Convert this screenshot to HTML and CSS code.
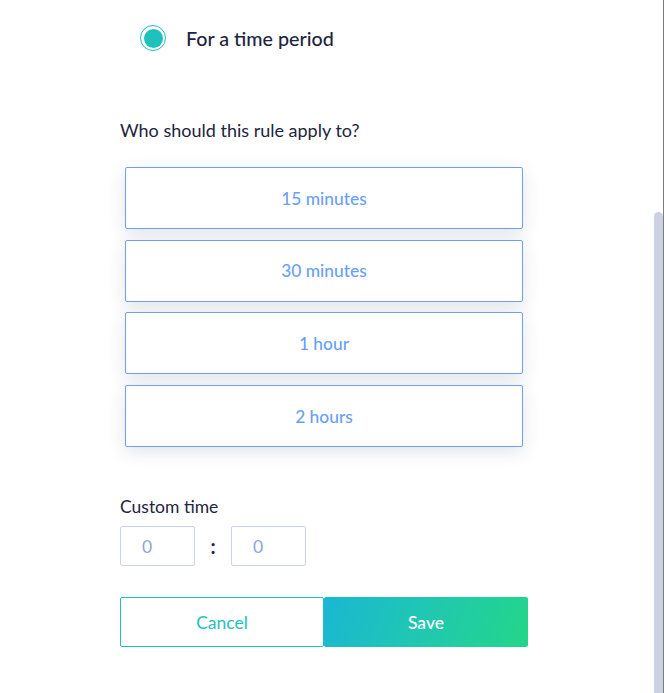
FILE: index.html
```html
<!DOCTYPE html>
<html lang="en">
<head>
    <meta charset="UTF-8">
    <meta name="viewport" content="width=device-width, initial-scale=1.0">
    <title>Rule duration</title>
    <link rel="stylesheet" href="styles.css">
</head>
<body>
    <div class="frame">
        <div class="panel">
            <label class="radio-row">
                <span class="radio"><span class="radio-dot"></span></span>
                <span class="radio-label">For a time period</span>
            </label>

            <h3 class="section-title">Who should this rule apply to?</h3>

            <div class="option-list">
                <button class="option">15 minutes</button>
                <button class="option">30 minutes</button>
                <button class="option">1 hour</button>
                <button class="option">2 hours</button>
            </div>

            <h3 class="section-title custom-title">Custom time</h3>
            <div class="time-inputs">
                <input class="time-box" type="text" value="0">
                <span class="time-sep">:</span>
                <input class="time-box" type="text" value="0">
            </div>

            <div class="actions">
                <button class="btn btn-outline">Cancel</button>
                <button class="btn btn-primary">Save</button>
            </div>
        </div>
        <div class="rail">
            <div class="thumb"></div>
        </div>
    </div>
</body>
</html>
```

FILE: styles.css
```css
:root {
    --text-color: #1d2440;
    --option-color: #6a9ff7;
    --option-border: #6e9ff5;
    --teal: #1fc1bd;
    --input-border: #c9d5ec;
    --input-text: #8ea6d6;
    --thumb: #c9d1e3;
}

* {
    margin: 0;
    padding: 0;
    box-sizing: border-box;
}

body {
    font-family: 'Lato', 'Noto Sans', sans-serif;
    background: #ffffff;
    color: var(--text-color);
    -webkit-font-smoothing: antialiased;
}

.frame {
    display: flex;
    width: 664px;
    height: 693px;
    overflow: hidden;
}

.panel {
    flex: 1;
    padding: 25px 0 0 120px;
}

.radio-row {
    display: flex;
    align-items: center;
    gap: 20px;
    margin-left: 20px;
}

.radio {
    width: 26px;
    height: 26px;
    border: 1.5px solid var(--teal);
    border-radius: 50%;
    display: flex;
    align-items: center;
    justify-content: center;
}

.radio-dot {
    width: 19px;
    height: 19px;
    border-radius: 50%;
    background: var(--teal);
}

.radio-label {
    font-size: 19.7px;
    font-weight: 500;
}

.section-title {
    font-size: 18px;
    font-weight: 400;
    margin-top: 69px;
    line-height: 20px;
}

.option-list {
    display: flex;
    flex-direction: column;
    gap: 10.7px;
    width: 398px;
    margin: 27px 0 0 5px;
}

.option {
    height: 62px;
    background: #ffffff;
    border: 1px solid var(--option-border);
    border-radius: 2px;
    box-shadow: 0 5px 18px rgba(40, 45, 90, 0.13);
    font-family: inherit;
    font-size: 17.4px;
    font-weight: 500;
    color: var(--option-color);
    cursor: pointer;
}

.custom-title {
    font-size: 17.5px;
    margin-top: 50px;
}

.time-inputs {
    display: flex;
    align-items: center;
    margin-top: 9px;
}

.time-box {
    width: 75px;
    height: 40px;
    border: 1px solid var(--input-border);
    border-radius: 2px;
    padding-left: 21px;
    font-family: inherit;
    font-size: 17.5px;
    color: var(--input-text);
    outline: none;
}

.time-sep {
    width: 36px;
    text-align: center;
    font-size: 20px;
    font-weight: 700;
    color: var(--text-color);
}

.actions {
    display: flex;
    margin-top: 31px;
}

.btn {
    width: 204px;
    height: 50px;
    border-radius: 2px;
    font-family: inherit;
    font-size: 17.5px;
    cursor: pointer;
}

.btn-outline {
    background: #ffffff;
    border: 1px solid var(--teal);
    color: var(--teal);
}

.btn-primary {
    border: none;
    color: #ffffff;
    font-weight: 500;
    background: linear-gradient(110deg, #1ab7d3 0%, #20c8b0 50%, #22d688 100%);
}

.rail {
    width: 11px;
    border-right: 1px solid #7d7d7d;
    padding-top: 212px;
}

.thumb {
    width: 9px;
    height: 100%;
    margin-left: 1px;
    background: var(--thumb);
    border-radius: 5px 5px 0 0;
}
```
